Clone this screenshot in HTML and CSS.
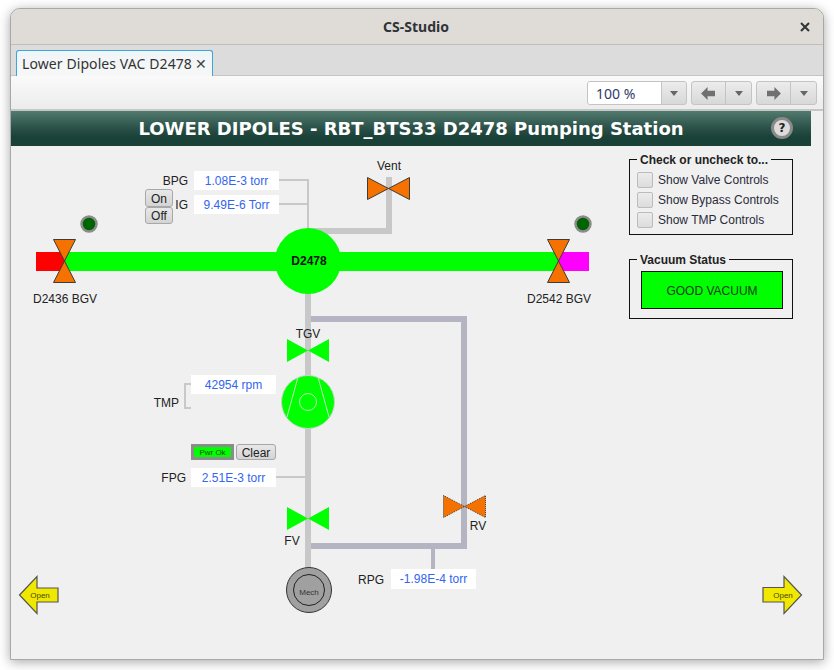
FILE: index.html
```html
<!DOCTYPE html>
<html lang="en">
<head>
<meta charset="utf-8">
<title>CS-Studio</title>
<link rel="stylesheet" href="styles.css">
</head>
<body>
<div class="window">
  <div class="titlebar">
    <span class="title">CS-Studio</span>
    <svg class="win-close" width="10" height="10" viewBox="0 0 10 10"><path d="M1 1L9 9M9 1L1 9" stroke="#2e3436" stroke-width="2" fill="none"/></svg>
  </div>
  <div class="tabbar">
    <div class="tab"><span class="tab-label">Lower Dipoles VAC D2478</span><span class="tab-x">✕</span></div>
  </div>
  <div class="toolbar">
    <div class="combo">
      <span class="combo-text">100 %</span>
      <span class="drop"><i class="caret"></i></span>
    </div>
    <div class="split">
      <span class="nav"><svg width="15" height="13" viewBox="0 0 16 14"><path d="M0 7L7 0V4H15V10H7V14Z" fill="#707070"/></svg></span>
      <span class="drop"><i class="caret"></i></span>
    </div>
    <div class="split">
      <span class="nav"><svg width="15" height="13" viewBox="0 0 16 14"><path d="M16 7L9 0V4H1V10H9V14Z" fill="#707070"/></svg></span>
      <span class="drop"><i class="caret"></i></span>
    </div>
  </div>
  <div class="display">
    <header class="banner">
      <h1>LOWER DIPOLES - RBT_BTS33 D2478 Pumping Station</h1>
      <span class="help">?</span>
    </header>
    <div class="canvas">
      <svg class="schematic" viewBox="11 146 813 514" width="813" height="514">
        <!-- pipes -->
        <g fill="#c8c8c8">
          <rect x="305" y="290" width="6" height="280"/>
          <rect x="308" y="228" width="84" height="6"/>
          <rect x="386" y="177" width="6" height="57"/>
        </g>
        <g fill="#b4b4c2">
          <rect x="311" y="316" width="156" height="6"/>
          <rect x="461" y="316" width="6" height="233"/>
          <rect x="311" y="543" width="156" height="6"/>
          <rect x="431" y="549" width="4" height="21"/>
        </g>
        <g fill="none" stroke="#c8c8c8" stroke-width="2">
          <path d="M279 180H308V230M279 204H308"/>
          <path d="M276 477H305"/>
          <path d="M191 384H185V408H191"/>
        </g>
        <!-- beam line -->
        <rect x="36" y="252" width="30" height="19" fill="#ff0000"/>
        <rect x="558" y="252" width="31" height="19" fill="#ff00ff"/>
        <rect x="64" y="252" width="494" height="19" fill="#00ff00"/>
        <circle cx="308" cy="261" r="33" fill="#00ff00"/>
        <text class="t-bold" x="309" y="265" text-anchor="middle">D2478</text>
        <!-- valves -->
        <g fill="#f57200" stroke="#3c3c3c" stroke-width="1">
          <path d="M53.500 239.500H75.500L53.500 282.500H75.500Z"/>
          <path d="M547.500 239.500H569.500L547.500 282.500H569.500Z"/>
          <path d="M367.500 177.500V199.500L409.500 177.500V199.500Z"/>
          <path class="dotted" d="M443.500 495.500V517.500L485.500 495.500V517.500Z"/>
        </g>
        <g fill="#00ff00">
          <path d="M287 339V362L329 339V362Z"/>
          <path d="M287 507V530L329 507V530Z"/>
        </g>
        <!-- leds -->
        <g fill="#006400" stroke="#8c8c8c" stroke-width="2.500">
          <circle cx="89" cy="224" r="7.500"/>
          <circle cx="583" cy="224" r="7.500"/>
        </g>
        <!-- turbo pump -->
        <circle cx="308" cy="402" r="26.500" fill="#00ff00" stroke="#c4d8c4" stroke-width="1"/>
        <g fill="none" stroke="#c0f0c0" stroke-width="1">
          <circle cx="308" cy="402" r="8.500"/>
          <path d="M298 377L287 417M318 377L329 417"/>
        </g>
        <!-- mech pump -->
        <circle cx="309" cy="590" r="22.500" fill="#a0a0a0" stroke="#333" stroke-width="1"/>
        <circle cx="309" cy="590" r="15.500" fill="none" stroke="#222" stroke-width="1"/>
        <text class="t-tiny t-grey" x="309" y="595" text-anchor="middle">Mech</text>
        <!-- navigation arrows -->
        <g fill="#f0e800" stroke="#555" stroke-width="1.200">
          <path d="M19.500 595L37 576.500V588H58V602H37V613.500Z"/>
          <path d="M801.500 595L784 576.500V587.500H763V602H784V613.500Z"/>
        </g>
        <text class="t-tiny t-olive" x="40" y="598" text-anchor="middle">Open</text>
        <text class="t-tiny t-olive" x="783" y="598" text-anchor="middle">Open</text>
        <!-- labels -->
        <g class="labels">
          <text x="188" y="185" text-anchor="end">BPG</text>
          <text x="188" y="209" text-anchor="end">IG</text>
          <text x="65" y="303" text-anchor="middle">D2436 BGV</text>
          <text x="559" y="303" text-anchor="middle">D2542 BGV</text>
          <text x="389" y="170" text-anchor="middle">Vent</text>
          <text x="308" y="338" text-anchor="middle">TGV</text>
          <text x="179" y="407" text-anchor="end">TMP</text>
          <text x="186" y="482" text-anchor="end">FPG</text>
          <text x="292" y="545" text-anchor="middle">FV</text>
          <text x="478" y="530" text-anchor="middle">RV</text>
          <text x="384" y="584" text-anchor="end">RPG</text>
        </g>
      </svg>

      <div class="field f-bpg">1.08E-3 torr</div>
      <div class="field f-ig">9.49E-6 Torr</div>
      <div class="field f-rpm">42954 rpm</div>
      <div class="field f-fpg">2.51E-3 torr</div>
      <div class="field f-rpg">-1.98E-4 torr</div>

      <div class="onoff">
        <button class="btn">On</button>
        <button class="btn">Off</button>
      </div>
      <div class="pwr-row">
        <div class="pwr">Pwr Ok</div>
        <button class="btn btn-clear">Clear</button>
      </div>

      <div class="side">
        <fieldset class="group group-checks">
          <legend><span class="legend-text">Check or uncheck to...</span></legend>
          <label class="check"><i class="box"></i>Show Valve Controls</label>
          <label class="check"><i class="box"></i>Show Bypass Controls</label>
          <label class="check"><i class="box"></i>Show TMP Controls</label>
        </fieldset>
        <fieldset class="group group-status">
          <legend><span class="legend-text">Vacuum Status</span></legend>
          <div class="status">GOOD VACUUM</div>
        </fieldset>
      </div>
    </div>
  </div>
</div>
</body>
</html>
```

FILE: styles.css
```css
* { box-sizing: border-box; }
html, body { margin: 0; padding: 0; background: #fff; height: 100%; overflow: hidden; }
body { font-family: "Liberation Sans", Arial, sans-serif; }

.window {
  margin: 8px 0 0 10px;
  width: 814px;
  height: 652px;
  display: flex;
  flex-direction: column;
  border: 1px solid #a8a8a8;
  border-radius: 10px 10px 0 0;
  box-shadow: 0 2px 12px rgba(0, 0, 0, .35);
  overflow: hidden;
  background: #f0f0f0;
}

.titlebar {
  height: 36px;
  flex: none;
  display: flex;
  align-items: center;
  justify-content: center;
  position: relative;
  background: #dfdbd6;
  border-bottom: 1px solid #c2bdb6;
}
.title { font: bold 14px "Noto Sans", sans-serif; color: #2e3436; margin-left: -2px; }
.win-close { position: absolute; right: 13px; top: 13px; }

.tabbar {
  height: 31px;
  flex: none;
  background: #dcdcdc;
  border-bottom: 1px solid #c4c4c4;
  padding: 5px 0 0 5px;
  display: flex;
  align-items: flex-start;
}
.tab {
  width: 197px;
  height: 26px;
  margin-bottom: -1px;
  position: relative;
  background: linear-gradient(#f0f5f8, #f7f7f7);
  border: 1px solid #39a6dc;
  border-bottom: 0;
  border-radius: 3px 3px 0 0;
  padding-left: 5px;
  display: flex;
  align-items: center;
  font: 14px "Noto Sans", sans-serif;
  color: #333;
  white-space: nowrap;
}
.tab-label { letter-spacing: .09px; }
.tab-x { margin-left: 3px; font-size: 14px; color: #444; }

.toolbar {
  height: 35px;
  flex: none;
  display: flex;
  justify-content: flex-end;
  align-items: flex-start;
  gap: 4px;
  padding: 5px 6px 0 0;
  background: linear-gradient(#fafafa, #ececec);
  border-bottom: 2px solid #c6c6c6;
}
.combo, .split {
  height: 24px;
  display: flex;
  border: 1px solid #c4c4c4;
  border-radius: 3px;
  background: linear-gradient(#ececec, #d8d8d8);
  overflow: hidden;
}
.combo { width: 100px; }
.split { width: 61px; }
.combo-text {
  width: 73px;
  background: #fff;
  font: 14px "Noto Sans", sans-serif;
  color: #2f3a6a;
  padding-left: 8px;
  line-height: 23px;
}
.nav {
  width: 34px;
  display: flex;
  align-items: center;
  justify-content: center;
  border-right: 1px solid #c4c4c4;
}
.drop { flex: 1; display: flex; align-items: center; justify-content: center; border-left: 1px solid #c4c4c4; }
.nav + .drop { border-left: 0; }
.caret { width: 0; height: 0; border: 4.500px solid transparent; border-top: 5px solid #666; border-bottom: 0; }

.display { flex: 1; display: flex; flex-direction: column; min-height: 0; }
.banner {
  margin-right: 12px;
  height: 35px;
  flex: none;
  position: relative;
  display: flex;
  align-items: center;
  justify-content: center;
  background: linear-gradient(#527a6e 0%, #2a5047 50%, #1a4137 75%, #1a4137 100%);
}
.banner h1 {
  margin: 0;
  font: bold 18px "DejaVu Sans", sans-serif;
  color: #fff;
  white-space: nowrap;
}
.help {
  position: absolute;
  right: 18px;
  top: 6px;
  width: 22px;
  height: 22px;
  border-radius: 50%;
  background: #dcdcdc;
  border: 3px solid #8a8a8a;
  font: bold 12px/16px "DejaVu Sans", sans-serif;
  text-align: center;
  color: #222;
}

.canvas { flex: 1; position: relative; background: #f0f0f0; }
.schematic { position: absolute; left: 0; top: 0; display: block; }
.labels text { font: 12px "Liberation Sans", sans-serif; fill: #222; }
.t-bold { font: bold 12px "Liberation Sans", sans-serif; fill: #111; }
.t-tiny { font: 8px "Liberation Sans", sans-serif; }
.t-grey { fill: #333; }
.t-olive { fill: #4a4a00; }
.dotted { stroke-dasharray: 1 1; }

.field {
  position: absolute;
  width: 85px;
  height: 19px;
  background: #fff;
  color: #3366ee;
  font-size: 12px;
  line-height: 21px;
  text-align: center;
}
.f-bpg { left: 183px; top: 25px; }
.f-ig  { left: 183px; top: 49px; }
.f-rpm { left: 180px; top: 229px; }
.f-fpg { left: 180px; top: 322px; }
.f-rpg { left: 380px; top: 423px; height: 20px; }

.btn {
  margin: 0;
  padding: 1px 0 0;
  display: block;
  border: 1px solid #a8a8a8;
  border-radius: 3px;
  background: linear-gradient(#e8e8e8, #d4d4d4);
  font: 12px "Liberation Sans", sans-serif;
  color: #222;
}
.onoff { position: absolute; left: 134px; top: 43px; width: 28px; display: flex; flex-direction: column; }
.onoff .btn { height: 18px; width: 28px; }
.onoff .btn + .btn { height: 17px; }
.pwr-row { position: absolute; left: 180px; top: 298px; display: flex; gap: 2px; }
.pwr {
  width: 43px;
  height: 16px;
  border: 3px solid #8c8c8c;
  background: #00ff00;
  font-size: 8px;
  line-height: 12px;
  text-align: center;
  color: #1f4a08;
}
.btn-clear { width: 40px; height: 16px; font-size: 12px; line-height: 14px; }

.side {
  position: absolute;
  left: 618px;
  top: 6px;
  width: 164px;
  display: flex;
  flex-direction: column;
  gap: 17px;
}
.group {
  margin: 0;
  padding: 0 7px 0 7px;
  border: 1px solid #111;
  min-width: 0;
}
.group legend {
  padding: 0 3px;
  margin-left: 0;
  font: bold 12px/14px "Liberation Sans", sans-serif;
  color: #222;
}
.legend-text { position: relative; top: 1px; }
.group-checks { height: 83px; padding-top: 4px; }
.group-status { height: 67px; padding: 5px 9px 0 11px; }
.group-status legend { margin-left: -4px; }
.check {
  display: flex;
  align-items: center;
  height: 20px;
  gap: 5px;
  font-size: 12px;
  color: #2a2a3a;
}
.box {
  width: 16px;
  height: 16px;
  border: 1px solid #bcbcbc;
  border-radius: 2px;
  background: linear-gradient(#ececec, #dcdcdc);
}
.status {
  height: 38px;
  width: 142px;
  background: #00ff00;
  border: 1px solid #111;
  font-size: 12px;
  line-height: 38px;
  text-align: center;
  color: #1a3a1a;
}
```
